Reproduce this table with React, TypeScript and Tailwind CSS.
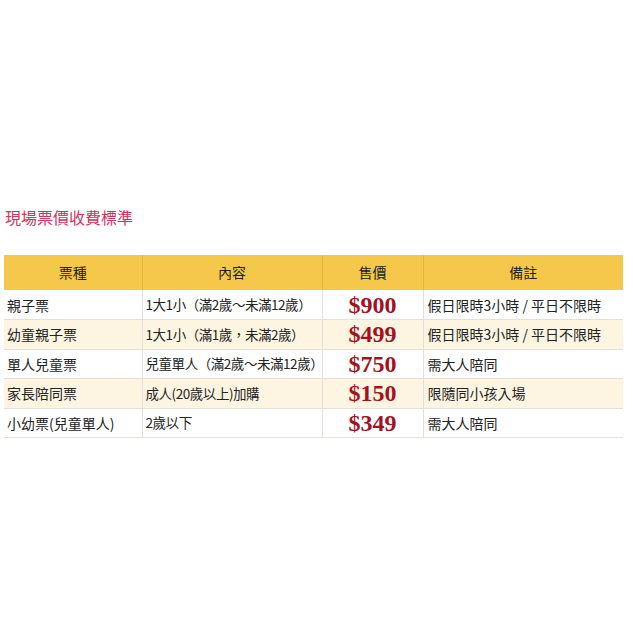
import React from "react";

const rows = [
  { name: "親子票", content: "1大1小（滿2歲～未滿12歲）", price: "$900", note: "假日限時3小時 / 平日不限時" },
  { name: "幼童親子票", content: "1大1小（滿1歲，未滿2歲）", price: "$499", note: "假日限時3小時 / 平日不限時" },
  { name: "單人兒童票", content: "兒童單人（滿2歲～未滿12歲）", price: "$750", note: "需大人陪同" },
  { name: "家長陪同票", content: "成人(20歲以上)加購", price: "$150", note: "限隨同小孩入場" },
  { name: "小幼票(兒童單人)", content: "2歲以下", price: "$349", note: "需大人陪同" },
];

export default function App() {
  return (
    <div
      className="w-[634px] h-[634px] bg-white"
      style={{ fontFamily: '"Noto Sans CJK TC", "Noto Sans", sans-serif' }}
    >
      <div className="pt-[206px] pl-[5px] text-[16px] leading-[22px] text-[#d0335a]">現場票價收費標準</div>
      <table className="ml-[4px] mt-[27px] w-[619px] table-fixed border-collapse text-[14px] text-[#222]">
        <colgroup>
          <col className="w-[138px]" />
          <col className="w-[180px]" />
          <col className="w-[101px]" />
          <col className="w-[200px]" />
        </colgroup>
        <thead>
          <tr className="bg-[#f5c84c] h-[35px]">
            <th className="font-normal border-r border-[#e2b640] text-center">票種</th>
            <th className="font-normal border-r border-[#e2b640] text-center">內容</th>
            <th className="font-normal border-r border-[#e2b640] text-center">售價</th>
            <th className="font-normal text-center">備註</th>
          </tr>
        </thead>
        <tbody>
          {rows.map((r, i) => (
            <tr key={r.name} className={(i % 2 === 1 ? "bg-[#fdf5e2]" : "bg-white") + " h-[29.5px] border-b border-[#e3e0da]"}>
              <td className="pl-[3px] border-r border-[#e3e0da] leading-none whitespace-nowrap">{r.name}</td>
              <td className="pl-[3px] pr-0 border-r border-[#e3e0da] leading-none whitespace-nowrap text-[13.5px] tracking-[-0.45px]">{r.content}</td>
              <td
                className="text-center border-r border-[#e3e0da] text-[24px] font-bold text-[#a3121f] leading-none"
                style={{ fontFamily: '"Liberation Serif", "DejaVu Serif", serif' }}
              >
                {r.price}
              </td>
              <td className="pl-[4px] leading-none whitespace-nowrap">{r.note}</td>
            </tr>
          ))}
        </tbody>
      </table>
    </div>
  );
}
